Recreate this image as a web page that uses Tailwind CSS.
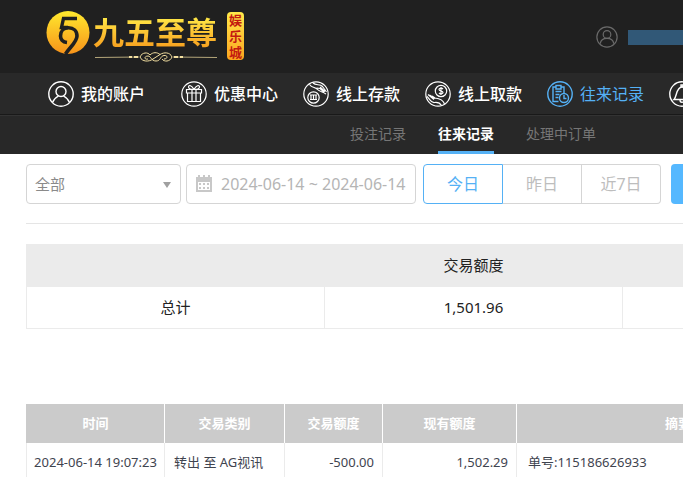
<!DOCTYPE html>
<html lang="zh-CN">
<head>
    <meta charset="UTF-8">
    <meta name="viewport" content="width=device-width, initial-scale=1.0">
    <title>往来记录</title>
    <script src="https://cdn.jsdelivr.net/npm/@tailwindcss/browser@4"></script>
    <style>
        body {
            font-family: 'Noto Sans', 'Noto Sans CJK SC', sans-serif;
        }
    </style>
</head>
<body class="bg-white overflow-x-hidden">
    <header class="bg-[#202020] h-[73px] flex items-start justify-between overflow-hidden">
        <a href="#" class="flex shrink-0 items-start pl-[46px] pt-[11px]">
            <svg class="w-11 h-11" viewBox="0 0 44 44" fill="none">
                <defs>
                    <linearGradient id="gold" x1="0" y1="0" x2="0" y2="1">
                        <stop offset="0" stop-color="#ffe92e"/>
                        <stop offset="1" stop-color="#f7931a"/>
                    </linearGradient>
                </defs>
                <circle cx="22" cy="21.500" r="21.500" fill="url(#gold)"/>
                <path d="M31 7.500H17.500L15.500 16.500H22" stroke="#202020" stroke-width="3.400"/>
                <path d="M21 31.500C16.500 31 14.500 28 14.500 25C14.500 20 18 16.800 22.500 16.800C27.500 16.800 31 20 31 25C31 31 24 36 19.500 43" stroke="#202020" stroke-width="3.600"/>
            </svg>
            <div class="ml-[3px] pt-[3px] w-[126px]">
                <h1 class="text-[31px] leading-[36px] font-bold whitespace-nowrap bg-linear-to-b from-[#fff04a] to-[#f59a1b] bg-clip-text text-transparent">九五至尊</h1>
                <svg class="mt-px w-[126px] h-3" viewBox="0 0 126 12" fill="none" stroke="#f3dfa0">
                    <path d="M2 6.500L46 6M124 6.500L80 6" stroke-width=".7"/>
                    <path d="M47 6C49 1 55 1 57 4M47 6C49 11 56 11 60 8L67 3.500C71 1 77 1 79 6C77 11 71 11 69 8M55 8C51 9 51 5 55 5C58 5 58 10 63 10C68 10 67 5 71 4.500C75 4 75 8 71 8M57 4C60 1 64 1 67 3.500" stroke-width="1"/>
                    <path d="M36 6h3M41 6h4M81 6h4M87 6h3" stroke-width="2"/>
                </svg>
            </div>
            <span class="ml-2 mt-px w-[17px] h-12 rounded-sm bg-linear-to-b from-[#ffe94a] to-[#fba31c] text-[#c31a10] text-[13px] leading-4 font-bold text-center">娱<br>乐<br>城</span>
        </a>
        <div class="flex items-center pt-[26px] gap-[10px]">
            <svg class="w-[22px] h-[22px]" viewBox="0 0 26 26" fill="none" stroke="#6a6a6a" stroke-width="1.400">
                <circle cx="13" cy="13" r="12"/>
                <circle cx="13" cy="10" r="4.500"/>
                <path d="M5 21C6 12.500 20 12.500 21 21"/>
            </svg>
            <div class="w-[55px] h-[15px] bg-[#315877]"></div>
        </div>
    </header>

    <nav class="bg-[#292929] h-[42px] border-b border-[#191919] flex items-center gap-[25px] pl-12 text-base leading-6 text-white whitespace-nowrap overflow-hidden">
        <a href="#" class="flex shrink-0 items-center gap-[7px] mr-[11px] font-medium">
            <svg class="w-[26px] h-[26px]" viewBox="0 0 26 26" fill="none" stroke="currentColor" stroke-width="1.400">
                <circle cx="13" cy="13" r="12.200"/>
                <circle cx="13" cy="10.500" r="5"/>
                <path d="M4.500 21.500C6 17.500 9 15.800 10.500 15M21.500 21.500C20 17.500 17 15.800 15.500 15"/>
            </svg>
            我的账户
        </a>
        <a href="#" class="flex shrink-0 items-center gap-[7px] font-medium">
            <svg class="w-[26px] h-[26px]" viewBox="0 0 26 26" fill="none" stroke="currentColor" stroke-width="1.200">
                <circle cx="13" cy="13" r="12.200"/>
                <path d="M5.500 8.500H20.500V12H5.500ZM6.500 12V20.500H19.500V12M11 8.500V20.500M15 8.500V20.500"/>
                <path d="M13 8.500C11 4.500 7.500 3.500 7.500 6C7.500 7.500 9 8.500 13 8.500C17 8.500 18.500 7.500 18.500 6C18.500 3.500 15 4.500 13 8.500"/>
            </svg>
            优惠中心
        </a>
        <a href="#" class="flex shrink-0 items-center gap-[7px] font-medium">
            <svg class="w-[26px] h-[26px]" viewBox="0 0 26 26" fill="none" stroke="currentColor" stroke-width="1.200">
                <circle cx="13" cy="13" r="12.200"/>
                <circle cx="10.500" cy="16.500" r="5.700"/>
                <path d="M7 14H14M7 18.500H14M8 14V18.500M10.500 14V18.500M13 14V18.500"/>
                <path d="M6.500 3.500C9 7 12 6 14 8C16 10.500 19 10.500 23 13M10 2C13 5 17 2.500 19.500 5.500L23.500 11M13.500 7L17 7.500L21.500 11.500M17 6L22 10.500"/>
            </svg>
            线上存款
        </a>
        <a href="#" class="flex shrink-0 items-center gap-[7px] font-medium">
            <svg class="w-[26px] h-[26px]" viewBox="0 0 26 26" fill="none" stroke="currentColor" stroke-width="1.200">
                <circle cx="13" cy="13" r="12.200"/>
                <circle cx="16" cy="10" r="5.700"/>
                <path d="M18 8C17 6.800 14 7 14 8.500C14 10.500 18 9.500 18 11.500C18 13 15 13.200 14 12M16 6V14"/>
                <path d="M2 15.500C5 18 5.500 22 9.500 21.500C13 21 15 22 16.500 24.500M3 13.500L9 18.500M4.500 14L10 17.500M7 15L10 17C14 17.500 18 18.500 19.500 23"/>
            </svg>
            线上取款
        </a>
        <a href="#" class="flex shrink-0 items-center gap-[7px] text-[#55b1f5]">
            <svg class="w-[26px] h-[26px]" viewBox="0 0 26 26" fill="none" stroke="currentColor" stroke-width="1.400">
                <circle cx="13" cy="13" r="12.200"/>
                <path d="M11.500 20.500H6V6H9V4.500H14V6H17V12M9 6V8H14V6M8.500 10.500H14.500M8.500 13.500H12.500M8.500 16.500H11.500"/>
                <circle cx="17" cy="17" r="4.500"/>
                <path d="M17 14V17.500H19.500"/>
            </svg>
            往来记录
        </a>
        <a href="#" class="flex shrink-0 items-center" aria-label="消息">
            <svg class="w-[26px] h-[26px]" viewBox="0 0 26 26" fill="none" stroke="currentColor" stroke-width="1.400">
                <circle cx="13" cy="13" r="12.200"/>
                <path d="M5 18.500C8 16 7 6 13 6C19 6 18 16 21 18.500ZM11 19C11 22 15 22 15 19M12 6V4H14V6"/>
            </svg>
        </a>
    </nav>

    <nav class="bg-[#282828] h-[39px] border-t border-[#333333] flex gap-8 pl-[350px] text-sm leading-9 text-[#767676] whitespace-nowrap overflow-hidden">
        <a href="#">投注记录</a>
        <a href="#" class="text-white font-bold border-b-3 border-[#55b1f5]">往来记录</a>
        <a href="#">处理中订单</a>
    </nav>

    <main class="pl-[26px] pt-[10px]">
        <div class="flex items-center h-10 whitespace-nowrap">
            <div class="relative shrink-0">
                <select aria-label="类别" class="appearance-none w-[155px] h-10 pl-2 border border-[#d5d5d5] rounded bg-white text-[15px] text-[#8a8a8a]">
                    <option>全部</option>
                </select>
                <svg class="absolute right-[10px] top-[18px] w-2 h-[6px] pointer-events-none" viewBox="0 0 8 6" fill="#a0a0a0"><path d="M0 0H8L4 6Z"/></svg>
            </div>
            <label class="ml-[5px] shrink-0 w-[230px] h-10 pl-2 flex items-center gap-2 border border-[#d5d5d5] rounded">
                <svg class="w-[18px] h-[18px] shrink-0" viewBox="0 0 18 18" fill="#c8c8c8">
                    <path d="M1 2H3V0H5V2H8V0H10V2H13V0H15V2H17V17H1Z"/>
                    <path d="M3 7H15V15H3Z" fill="#fff"/>
                    <path d="M4 8H6V10H4ZM8 8H10V10H8ZM12 8H14V10H12ZM4 12H6V14H4ZM8 12H10V14H8ZM12 12H14V14H12Z"/>
                </svg>
                <input type="text" aria-label="日期" value="2024-06-14 ~ 2024-06-14" class="w-full min-w-0 text-base text-[#b5b5b5] outline-none">
            </label>
            <div class="ml-[7px] flex shrink-0 text-base text-[#bdbdbd]">
                <button class="w-20 h-10 border border-[#55b1f5] rounded-l text-[#55b1f5]">今日</button>
                <button class="w-[79px] h-10 border-y border-r border-[#d5d5d5]">昨日</button>
                <button class="w-[79px] h-10 border-y border-r border-[#d5d5d5] rounded-r">近7日</button>
            </div>
            <button aria-label="搜索" class="ml-[10px] shrink-0 w-20 h-10 rounded bg-[#55b8ff]"></button>
        </div>

        <hr class="mt-[19px] border-[#e5e5e5]">

        <table class="mt-5 w-[895px] table-fixed border-collapse text-[15px] leading-5 text-center text-[#222222]">
            <thead>
                <tr class="h-[42px] bg-[#ebebeb]">
                    <th class="border-l border-[#ebebeb]"></th>
                    <th class="font-normal">交易额度</th>
                    <th></th>
                </tr>
            </thead>
            <tbody>
                <tr class="h-[42px]">
                    <td class="border border-[#ebebeb]">总计</td>
                    <td class="border border-[#ebebeb]">1,501.96</td>
                    <td class="border border-[#ebebeb]"></td>
                </tr>
            </tbody>
        </table>

        <table class="mt-[75px] w-[813px] table-fixed border-collapse text-[13px] leading-5 text-[#3f444f]">
            <colgroup>
                <col class="w-[138px]">
                <col class="w-[120px]">
                <col class="w-[98px]">
                <col class="w-[134px]">
                <col>
            </colgroup>
            <thead>
                <tr class="h-[39px] bg-[#cbcbcb] text-white text-center">
                    <th class="border-r border-l border-l-[#cbcbcb] border-white">时间</th>
                    <th class="border-r border-white">交易类别</th>
                    <th class="border-r border-white">交易额度</th>
                    <th class="border-r border-white">现有额度</th>
                    <th>摘要</th>
                </tr>
            </thead>
            <tbody>
                <tr class="h-[38px] whitespace-nowrap">
                    <td class="border-x border-[#ebebeb] text-center">2024-06-14 19:07:23</td>
                    <td class="border-r border-[#ebebeb] pl-[9px]">转出 至 AG视讯</td>
                    <td class="border-r border-[#ebebeb] pr-2 text-right">-500.00</td>
                    <td class="border-r border-[#ebebeb] pr-2 text-right">1,502.29</td>
                    <td class="pl-[11px]">单号:115186626933</td>
                </tr>
            </tbody>
        </table>
    </main>
</body>
</html>
